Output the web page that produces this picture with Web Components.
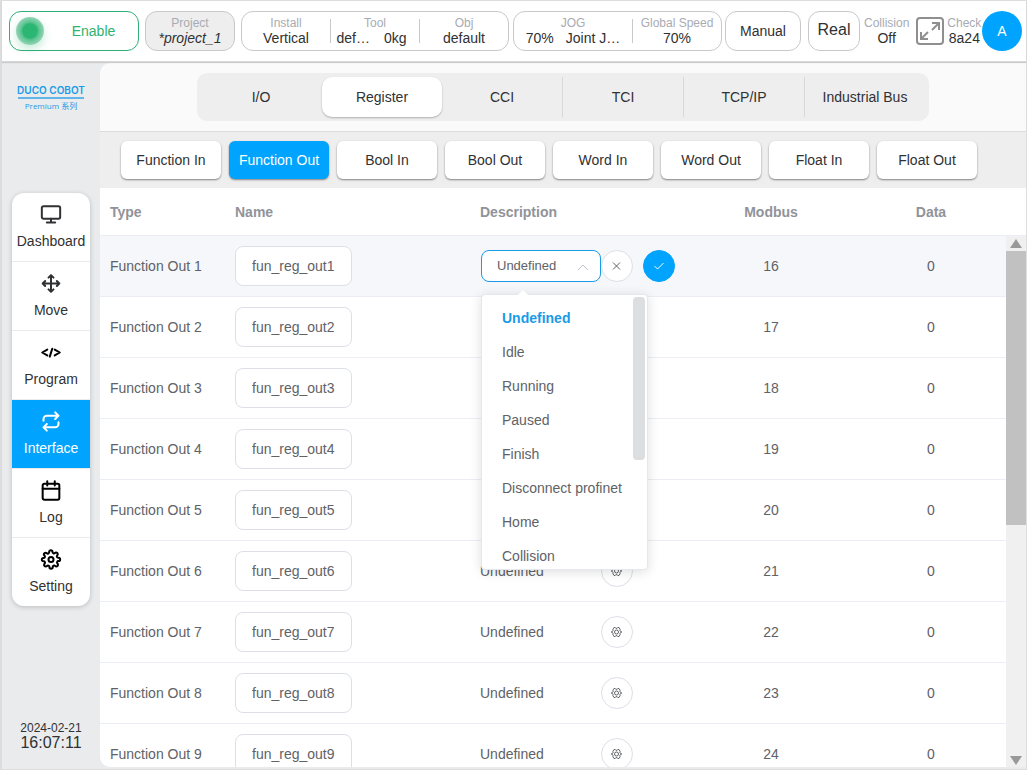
<!DOCTYPE html>
<html lang="en">
<head>
<meta charset="utf-8">
<meta name="viewport" content="width=device-width, initial-scale=1">
<title>DUCO COBOT - Register</title>
<style>
  body {
    margin: 0;
    font-family: "Liberation Sans", "Noto Sans CJK SC", sans-serif;
    font-size: 14px;
    line-height: 16px;
    color: #303133;
    --blue: #00a4ff;
    --line: #ebeef5;
  }
</style>
</head>
<body>
<cobot-app></cobot-app>

<script>
const icons = {
  dashboard: `<rect x="1" y="2" width="22" height="15" rx="2"/><path d="M7 21.500h10M12 17v4"/>`,
  move: `<path d="M5 9l-3 3 3 3M9 5l3-3 3 3M15 19l-3 3-3-3M19 9l3 3-3 3M2 12h20M12 2v20"/>`,
  program: `<path d="M7.500 8.500l-6 3.500 6 3.500M16.500 8.500l6 3.500-6 3.500M13.500 7.500l-3 9.500"/>`,
  interface: `<path d="M17 1l4 4-4 4M3 11V9a4 4 0 0 1 4-4h14M7 23l-4-4 4-4M21 13v2a4 4 0 0 1-4 4H3"/>`,
  log: `<rect x="2" y="4" width="20" height="19" rx="2"/><path d="M16.500 1v5M7.500 1v5M2 10h20"/>`,
  setting: `<circle cx="12" cy="12" r="3"/><path d="M19.400 15a1.650 1.650 0 0 0 .33 1.820l.06.06a2 2 0 1 1-2.830 2.830l-.06-.06a1.650 1.650 0 0 0-2.800 1.170V21a2 2 0 0 1-4 0v-.09a1.650 1.650 0 0 0-2.900-1.080l-.06.06a2 2 0 1 1-2.830-2.830l.06-.06a1.650 1.650 0 0 0-1.170-2.800H3a2 2 0 0 1 0-4h.09a1.650 1.650 0 0 0 1.080-2.900l-.06-.06a2 2 0 1 1 2.830-2.830l.06.06a1.650 1.650 0 0 0 2.800-1.170V3a2 2 0 0 1 4 0v.09a1.650 1.650 0 0 0 2.800 1.170l.06-.06a2 2 0 1 1 2.830 2.830l-.06.06a1.650 1.650 0 0 0 1.170 2.800H21a2 2 0 0 1 0 4h-.09a1.650 1.650 0 0 0-1.510 1z"/>`,
};

// base class: puts the styles and markup of an element in its shadow root
class BaseElement extends HTMLElement {
  constructor() {
    super();
    this.attachShadow({ mode: "open" });
  }

  connectedCallback() {
    this.shadowRoot.innerHTML = /* html */`
    <style>
      *, :host { box-sizing: border-box; }
      button, input, select { font: inherit; color: inherit; margin: 0; }
      svg { display: block; }
      ${this.constructor.styles}
    </style>
    ${this.render()}`;
  }
}

class StatusCell extends BaseElement {
  static get styles() {
    return /* css */`
      :host {
        display: flex;
        flex-direction: column;
        align-items: center;
        justify-content: center;
        white-space: nowrap;
      }
      .label { font-size: 12px; line-height: 15px; color: #a8abb2; }
      .value { display: flex; gap: 12px; line-height: 15px; }
      :host([loose]) .value { gap: 14px; padding-right: 7px; }
    `;
  }

  render() {
    return /* html */`
    <span class="label">${this.getAttribute("label")}</span>
    <span class="value"><slot></slot></span>`;
  }
}

class TopBar extends BaseElement {
  static get styles() {
    return /* css */`
      :host {
        display: flex;
        align-items: center;
        height: 61px;
        padding: 0 4px 0 7px;
        background: #fff;
        border-bottom: 1px solid #d8d8d8;
        box-shadow: 0 1px 1px #0002;
        z-index: 2;
      }
      .box, button {
        display: flex;
        flex: none;
        align-items: center;
        justify-content: center;
        height: 40px;
        padding: 0;
        border: 1px solid #c8c9cc;
        border-radius: 12px;
        background: #fff;
      }
      .enable { width: 130px; border-color: #2fae77; color: #32b16c; margin-right: 6px; }
      .enable span { flex: 1; padding-left: 5px; }
      .light {
        flex: none;
        width: 28px;
        height: 28px;
        margin-left: 6px;
        border-radius: 50%;
        background: radial-gradient(circle, #2bb673 0 7px, #5dc493 9px, #93d5b4 14px);
        box-shadow: 0 4px 8px #2bb67344;
      }
      .project { width: 90px; background: #eee; margin-right: 6px; }
      .group status-cell { flex: 1; height: 24px; border-left: 1px solid #c8c9cc; }
      .group status-cell:first-child { border-left: 0; }
      .setup { width: 268px; margin-right: 4px; }
      .jog { width: 209px; margin-right: 3px; }
      .jog status-cell:first-child { flex: 0 0 118px; }
      .manual { width: 76px; margin-right: 7px; }
      .real { width: 52px; font-size: 16px; padding-bottom: 3px; margin-right: 4px; }
      .full { width: 30px; height: 30px; border: 0; margin: 0 2px 0 6px; }
      .avatar {
        width: 40px;
        border: 0;
        border-radius: 50%;
        background: var(--blue);
        color: #fff;
        margin-left: auto;
      }
    `;
  }

  render() {
    return /* html */`
    <button class="enable"><b class="light"></b><span>Enable</span></button>
    <button class="project"><status-cell label="Project"><i>*project_1</i></status-cell></button>
    <div class="box group setup">
      <status-cell label="Install">Vertical</status-cell>
      <status-cell label="Tool" loose><span>def…</span><span>0kg</span></status-cell>
      <status-cell label="Obj">default</status-cell>
    </div>
    <div class="box group jog">
      <status-cell label="JOG"><span>70%</span><span>Joint J…</span></status-cell>
      <status-cell label="Global Speed">70%</status-cell>
    </div>
    <button class="manual">Manual</button>
    <button class="real">Real</button>
    <status-cell label="Collision">Off</status-cell>
    <button class="full" aria-label="Full screen">
      <svg width="30" height="30" fill="none" stroke="#8f8f8f" stroke-width="2">
        <rect x="2" y="2" width="26" height="26" rx="3"/>
        <path d="M17 7h7v7M24 7l-7 7M6 16v7h7M6 23l7-7"/>
      </svg>
    </button>
    <status-cell label="Check">8a24</status-cell>
    <button class="avatar">A</button>`;
  }
}

class SideBar extends BaseElement {
  static get styles() {
    return /* css */`
      :host {
        display: flex;
        flex-direction: column;
        align-items: center;
        flex: none;
        width: 98px;
        padding: 21px 0 16px;
      }
      .logo {
        width: 66px;
        height: 109px;
        color: #1a9be8;
        text-align: center;
        white-space: nowrap;
      }
      .brand {
        font: 600 10px/12px Inter, "Liberation Sans", sans-serif;
        border-bottom: 2px solid #62b5e8;
        padding-bottom: 1px;
        display: flex;
        justify-content: center;
      }
      .series { font: 8px/14px "Open Sans", "Noto Sans CJK SC", sans-serif; }
      nav {
        width: 78px;
        border-radius: 12px;
        background: #fff;
        overflow: hidden;
        box-shadow: 0 1px 5px #0003;
      }
      a {
        display: flex;
        flex-direction: column;
        align-items: center;
        gap: 8px;
        height: 69px;
        padding-top: 11px;
        border-bottom: 1px solid #ebebeb;
        color: #303133;
        text-decoration: none;
      }
      a:last-child { height: 68px; border: 0; }
      a[aria-current] { background: var(--blue); background-clip: padding-box; color: #fff; }
      svg {
        width: 20px;
        height: 21px;
        fill: none;
        stroke: currentColor;
        stroke-width: 2.4;
        stroke-linecap: round;
        stroke-linejoin: round;
        overflow: visible;
      }
      .program svg, .log svg, .setting svg { color: #000; }
      .time { margin-top: auto; text-align: center; }
      .date { font-size: 12px; line-height: 14px; }
      .hour { font-size: 16px; line-height: 16px; }
    `;
  }

  render() {
    const items = ["Dashboard", "Move", "Program", "Interface", "Log", "Setting"];
    const links = items.map(name => {
      const key = name.toLowerCase();
      const current = name === "Interface" ? `aria-current="page"` : "";
      return `<a href="#${key}" class="${key}" ${current}><svg viewBox="0 0 24 24">${icons[key]}</svg>${name}</a>`;
    }).join("");

    return /* html */`
    <div class="logo">
      <div class="brand">DUCO COBOT</div>
      <div class="series">Premium 系列</div>
    </div>
    <nav>${links}</nav>
    <div class="time">
      <div class="date">2024-02-21</div>
      <div class="hour">16:07:11</div>
    </div>`;
  }
}

class TabBar extends BaseElement {
  static get styles() {
    return /* css */`
      :host {
        display: flex;
        justify-content: center;
        padding: 10px 0;
        background: #fafafa;
        border-bottom: 1px solid #dcdcdc;
      }
      .tabs {
        display: flex;
        height: 48px;
        padding: 4px;
        border-radius: 10px;
        background: #eee;
      }
      button { width: 120px; border: 0; border-radius: 10px; background: none; padding: 0; }
      .active { background: #fff; box-shadow: 0 1px 2px #0004; }
      hr { width: 1px; margin: 0; border: 0; background: #d8d8d8; }
      hr.near { background: none; }
    `;
  }

  render() {
    const names = ["I/O", "Register", "CCI", "TCI", "TCP/IP", "Industrial Bus"];
    const tabs = names.map((name, i) => {
      const line = i === 0 || i === 2 ? "" : `<hr class="${i === 1 ? "near" : ""}">`;
      return `${line}<button class="${i === 1 ? "active" : ""}">${name}</button>`;
    });
    return `<div class="tabs">${tabs.join("")}</div>`;
  }
}

class RegisterBar extends BaseElement {
  static get styles() {
    return /* css */`
      :host {
        display: flex;
        gap: 8px;
        padding: 9px 21px;
        background: #eee;
      }
      button {
        width: 100px;
        height: 38px;
        padding: 0;
        border: 0;
        border-radius: 6px;
        background: #fff;
        box-shadow: 0 1px 2px #0007;
        white-space: nowrap;
      }
      .active { background: var(--blue); color: #fff; }
    `;
  }

  render() {
    return ["Function", "Bool", "Word", "Float"].map(kind => `
      <button>${kind} In</button>
      <button class="${kind === "Function" ? "active" : ""}">${kind} Out</button>
    `).join("");
  }
}

class RoundButton extends BaseElement {
  static get styles() {
    return /* css */`
      :host { display: block; }
      button {
        display: grid;
        place-items: center;
        width: 32px;
        height: 32px;
        padding: 0;
        border: 1px solid #dcdfe6;
        border-radius: 50%;
        background: #fff;
      }
      :host([kind="check"]) button { background: var(--blue); border-color: var(--blue); color: #fff; }
      svg { fill: none; stroke: currentColor; }
    `;
  }

  render() {
    const kind = this.getAttribute("kind");
    const shapes = {
      close: `<path d="M2 2.500l7 7M9 2.500l-7 7"/>`,
      check: `<path d="M1.500 6l3 3 6-6"/>`,
      gear: `<circle cx="5.500" cy="6" r="2"/><path d="M3 1.500h1.200l.6.800h1.400l.6-.8H8l1.100 1.800-.3.900.6 1.100 1 .2v1l-1 .2-.6 1.100.3.900L8 10.500H6.800l-.6-.8H4.800l-.6.800H3L1.900 8.700l.3-.9-.6-1.100-1-.2v-1l1-.2.6-1.100-.3-.9z"/>`,
    };
    return `<button aria-label="${kind}"><svg width="12" height="12">${shapes[kind]}</svg></button>`;
  }
}

class StateSelect extends BaseElement {
  static get styles() {
    return /* css */`
      :host { display: block; position: relative; width: 120px; }
      .field { display: grid; align-items: center; }
      .field > * { grid-area: 1 / 1; }
      select {
        appearance: none;
        width: 100%;
        height: 32px;
        padding: 0 28px 0 15px;
        border: 1px solid #1a9be8;
        border-radius: 8px;
        background: #fff;
        font-size: 13px;
        outline: 0;
      }
      .field svg {
        justify-self: end;
        margin: 2px 12px 0 0;
        fill: none;
        stroke: #c0c4cc;
        pointer-events: none;
      }
      .menu {
        position: absolute;
        top: 44px;
        left: 0;
        z-index: 5;
        width: 167px;
        height: 276px;
        border: 1px solid #e4e7ed;
        border-radius: 4px;
        background: #fff;
        box-shadow: 0 2px 12px #0002;
      }
      .menu::before {
        content: "";
        position: absolute;
        top: -5px;
        left: 35px;
        border: solid transparent;
        border-width: 0 6px 6px;
        border-bottom-color: #fff;
      }
      .scroll { display: flex; height: 100%; overflow: hidden; }
      ul { flex: 1; list-style: none; margin: 0; padding: 6px 0; }
      li { height: 34px; line-height: 34px; padding-left: 20px; white-space: nowrap; }
      li[aria-selected] { color: #1a9be8; font-weight: bold; }
      .thumb { width: 12px; height: 163px; margin: 2px 2px 0 0; border-radius: 4px; background: #dddee0; }
    `;
  }

  render() {
    const states = ["Undefined", "Idle", "Running", "Paused", "Finish", "Disconnect profinet", "Home", "Collision"];
    const items = states.map((state, i) =>
      `<li role="option" ${i === 0 ? `aria-selected="true"` : ""}>${state}</li>`).join("");

    return /* html */`
    <div class="field">
      <select aria-label="Description"><option>Undefined</option></select>
      <svg width="12" height="7"><path d="M1 6l5-5 5 5"/></svg>
    </div>
    <div class="menu">
      <div class="scroll">
        <ul role="listbox">${items}</ul>
        <div class="thumb"></div>
      </div>
    </div>`;
  }
}

class ScrollRail extends BaseElement {
  static get styles() {
    return /* css */`
      :host { display: flex; flex-direction: column; width: 20px; }
      .head { height: 48px; border-bottom: 1px solid var(--line); }
      .rail {
        flex: 1;
        display: flex;
        flex-direction: column;
        align-items: center;
        background: #f0f0f0;
      }
      .thumb { width: 100%; height: 274px; background: #c1c1c1; margin-bottom: auto; }
      svg { flex: none; fill: #999; }
    `;
  }

  render() {
    return /* html */`
    <div class="head"></div>
    <div class="rail">
      <svg width="14" height="15"><path d="M1 12L7 3l6 9z"/></svg>
      <div class="thumb"></div>
      <svg width="14" height="15"><path d="M1 4h12l-6 9z"/></svg>
    </div>`;
  }
}

class RegisterTable extends BaseElement {
  static get styles() {
    return /* css */`
      :host {
        display: flex;
        flex: 1;
        min-height: 0;
        overflow: hidden;
        background: #fff;
        color: #606266;
      }
      .body { flex: 1; min-width: 0; }
      table { width: 100%; table-layout: fixed; border-collapse: separate; border-spacing: 0; }
      th, td { padding: 0 0 0 10px; border-bottom: 1px solid var(--line); text-align: left; }
      th { height: 48px; color: #909399; }
      td { height: 61px; }
      tr.active td { background: #f5f7fa; }
      .center { padding: 0; text-align: center; }
      input {
        display: block;
        width: 117px;
        height: 40px;
        padding: 0 16px;
        border: 1px solid #dcdfe6;
        border-radius: 8px;
        background: #fff;
      }
      .state { display: flex; align-items: center; }
      .state span { width: 121px; }
      .state round-button + round-button { margin-left: 10px; }
      state-select { margin-left: 1px; }
    `;
  }

  render() {
    const rows = [];
    for (let i = 1; i <= 9; i++) {
      // rows 2 to 5 lie wholly under the open menu
      const text = i > 5 ? "Undefined" : "";
      const state = i === 1
        ? `<state-select></state-select><round-button kind="close"></round-button><round-button kind="check"></round-button>`
        : `<span>${text}</span><round-button kind="gear"></round-button>`;
      rows.push(/* html */`
      <tr class="${i === 1 ? "active" : ""}">
        <td>Function Out ${i}</td>
        <td><input value="fun_reg_out${i}" aria-label="Name of Function Out ${i}"></td>
        <td><div class="state">${state}</div></td>
        <td class="center">${15 + i}</td>
        <td class="center">0</td>
      </tr>`);
    }

    return /* html */`
    <div class="body">
      <table>
        <colgroup>
          <col style="width: 125px"><col style="width: 245px"><col style="width: 216px">
          <col style="width: 170px"><col style="width: 150px">
        </colgroup>
        <thead>
          <tr>
            <th>Type</th><th>Name</th><th>Description</th>
            <th class="center">Modbus</th><th class="center">Data</th>
          </tr>
        </thead>
        <tbody>${rows.join("")}</tbody>
      </table>
    </div>
    <scroll-rail></scroll-rail>`;
  }
}

class CobotApp extends BaseElement {
  static get styles() {
    return /* css */`
      :host {
        display: flex;
        flex-direction: column;
        height: 100vh;
        border: 1px solid #dcdddf;
        border-left-width: 2px;
        background: #e9ebed;
      }
      .main { display: flex; flex: 1; min-height: 0; padding: 1px 0 2px; }
      .page {
        flex: 1;
        min-width: 0;
        display: flex;
        flex-direction: column;
        border-radius: 10px 0 0 10px;
        overflow: hidden;
      }
    `;
  }

  render() {
    return /* html */`
    <top-bar></top-bar>
    <div class="main">
      <side-bar></side-bar>
      <div class="page">
        <tab-bar></tab-bar>
        <register-bar></register-bar>
        <register-table></register-table>
      </div>
    </div>`;
  }
}

customElements.define("status-cell", StatusCell);
customElements.define("top-bar", TopBar);
customElements.define("side-bar", SideBar);
customElements.define("tab-bar", TabBar);
customElements.define("register-bar", RegisterBar);
customElements.define("round-button", RoundButton);
customElements.define("state-select", StateSelect);
customElements.define("scroll-rail", ScrollRail);
customElements.define("register-table", RegisterTable);
customElements.define("cobot-app", CobotApp);
</script>
</body>
</html>
